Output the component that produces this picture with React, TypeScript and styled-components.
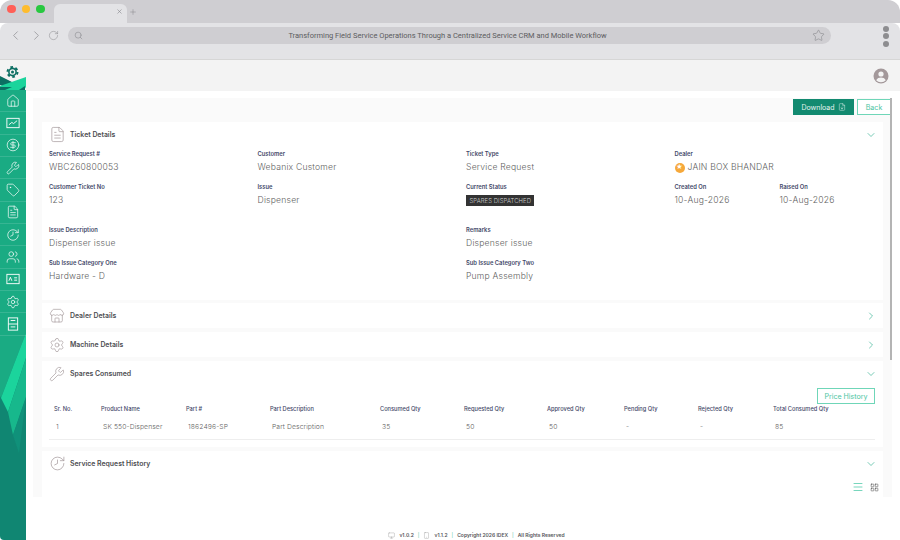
import * as React from "react";
import styled, { createGlobalStyle } from "styled-components";
import {
  ChevronDown,
  ChevronLeft,
  ChevronRight,
  CircleDollarSign,
  FileDown,
  FileText,
  History,
  Home,
  LayoutGrid,
  Menu,
  RotateCw,
  Search,
  Settings,
  Smartphone,
  Star,
  Store,
  Tag,
  Users,
  Wrench,
  Monitor,
  Plus,
  X,
} from "lucide-react";

const FONT = `Inter, "Open Sans", "Liberation Sans", sans-serif`;

const GlobalStyle = createGlobalStyle`
  html, body {
    margin: 0;
    padding: 0;
    background: #fff;
    overflow: hidden;
  }
  * {
    box-sizing: border-box;
  }
`;

const columns = [
  "Sr. No.",
  "Product Name",
  "Part #",
  "Part Description",
  "Consumed Qty",
  "Requested Qty",
  "Approved Qty",
  "Pending Qty",
  "Rejected Qty",
  "Total Consumed Qty",
];

const row = ["1", "SK 550-Dispenser", "1862496-SP", "Part Description", "35", "50", "50", "-", "-", "85"];

type IconProps = { size?: number; strokeWidth?: number };

const ChartBox = ({ size = 13, strokeWidth = 1.3 }: IconProps) => (
  <svg width={size} height={size} viewBox="0 0 24 24" fill="none" stroke="currentColor" strokeWidth={strokeWidth * 1.3}>
    <rect x="1.5" y="4" width="21" height="16" />
    <path d="M5 15l5-4 3 2 6-5" />
  </svg>
);

const CardBox = ({ size = 13, strokeWidth = 1.3 }: IconProps) => (
  <svg width={size} height={size} viewBox="0 0 24 24" fill="none" stroke="currentColor" strokeWidth={strokeWidth * 1.3}>
    <rect x="1.5" y="4" width="21" height="16" />
    <path d="M5 15l2.5-6 2.5 6M14 10h5M14 14h5" />
  </svg>
);

const Cabinet = ({ size = 13, strokeWidth = 1.3 }: IconProps) => (
  <svg width={size} height={size} viewBox="0 0 24 24" fill="none" stroke="currentColor" strokeWidth={strokeWidth * 1.3}>
    <rect x="4" y="1.5" width="16" height="21" />
    <path d="M4 12h16M8 6h8M8 17h8" />
  </svg>
);

const ClockBack = ({ size = 13, strokeWidth = 1.3 }: IconProps) => (
  <FlipIcon>
    <History size={size} strokeWidth={strokeWidth} />
  </FlipIcon>
);

const navIcons: React.ComponentType<IconProps>[] = [
  Home,
  ChartBox,
  CircleDollarSign,
  Wrench,
  Tag,
  FileText,
  ClockBack,
  Users,
  CardBox,
  Settings,
  Cabinet,
];

const Field = ({ label, children }: { label: string; children: React.ReactNode }) => (
  <FieldWrap>
    <Label>{label}</Label>
    <Value>{children}</Value>
  </FieldWrap>
);

const App = () => {
  return (
    <Window>
      <GlobalStyle />
      <TabStrip>
        <Lights>
          <Light color="#ff5f57" />
          <Light color="#febc2e" />
          <Light color="#28c840" />
        </Lights>
        <BrowserTab>
          <X size={7} strokeWidth={2} />
        </BrowserTab>
        <NewTab>
          <Plus size={8} strokeWidth={1.5} />
        </NewTab>
      </TabStrip>

      <Toolbar>
        <NavArrows>
          <ChevronLeft size={15} strokeWidth={1.2} />
          <ChevronRight size={15} strokeWidth={1.2} />
          <RotateCw size={11} strokeWidth={1.2} />
        </NavArrows>
        <AddressBar>
          <Search size={9} strokeWidth={1.6} />
          <UrlText>Transforming Field Service Operations Through a Centralized Service CRM and Mobile Workflow</UrlText>
          <Star size={13} strokeWidth={1.2} />
        </AddressBar>
        <Kebab>
          <i />
          <i />
          <i />
        </Kebab>
      </Toolbar>

      <Body>
        <Sidebar>
          <Brand>
            <svg width="26" height="30" viewBox="0 0 26 30">
              <polygon points="0,16 14,23 6,27 0,25" fill="#0c6f63" />
              <polygon points="0,30 0,26 26,17 26,27 24,30" fill="#1bd49c" />
              <polygon points="0,27 12,27 5,30 0,30" fill="#0c6f63" />
              <polygon points="19,30 25,26 25,30" fill="#0c6f63" />
              <circle cx="12.5" cy="12" r="5" fill="none" stroke="#0c6f63" strokeWidth="2" strokeDasharray="2.6 2.6" />
              <circle cx="12.5" cy="12" r="4.4" fill="#0c6f63" />
              <circle cx="12.5" cy="12" r="2.8" fill="#f3f3f3" />
              <circle cx="12.5" cy="12" r="1.5" fill="#0c6f63" />
            </svg>
          </Brand>
          <NavList>
            {navIcons.map((Icon, i) => (
              <NavItem key={i}>
                <Icon size={14} strokeWidth={1.2} />
              </NavItem>
            ))}
          </NavList>
          <SideArt viewBox="0 0 26 450">
            <rect width="26" height="450" fill="#108672" />
            <polygon points="0,0 26,0 26,243 1,308 0,306" fill="#1aab83" />
            <polygon points="26,243 26,268 8,322 1,308" fill="#1bd49c" />
            <polygon points="26,268 26,307 13,345 8,322" fill="#17b88c" />
            <polygon points="26,307 19,363 13,345" fill="#10917a" />
          </SideArt>
        </Sidebar>

        <Main>
          <TopBar>
            <Avatar viewBox="0 0 16 16">
              <circle cx="8" cy="8" r="7.5" fill="#a3989a" />
              <circle cx="8" cy="6" r="2.6" fill="#f3f3f3" />
              <path d="M3.2 12.2c1-2 2.9-2.7 4.8-2.7s3.8.7 4.8 2.7c-1.2 1.3-2.9 2-4.8 2s-3.6-.7-4.8-2z" fill="#f3f3f3" />
            </Avatar>
          </TopBar>

          <Content>
            <Panel>
              <ActionRow>
                <PrimaryButton>
                  Download <FileDown size={8} strokeWidth={1.4} />
                </PrimaryButton>
                <OutlineButton>Back</OutlineButton>
              </ActionRow>

              <Card>
                <CardHead>
                  <IconSlot>
                    <FileText size={17} strokeWidth={1} />
                  </IconSlot>
                  <CardTitle>Ticket Details</CardTitle>
                  <ChevronDown size={12} strokeWidth={1.3} />
                </CardHead>
                <FieldGrid>
                  <Field label="Service Request #">WBC260800053</Field>
                  <Field label="Customer">Webanix Customer</Field>
                  <Field label="Ticket Type">Service Request</Field>
                  <Field label="Dealer">
                    <StarBadge>★</StarBadge>JAIN BOX BHANDAR
                  </Field>

                  <Field label="Customer Ticket No">123</Field>
                  <Field label="Issue">Dispenser</Field>
                  <Field label="Current Status">
                    <StatusPill>SPARES DISPATCHED</StatusPill>
                  </Field>
                  <DatePair>
                    <Field label="Created On">10-Aug-2026</Field>
                    <Field label="Raised On">10-Aug-2026</Field>
                  </DatePair>

                  <WideField>
                    <Field label="Issue Description">Dispenser issue</Field>
                  </WideField>
                  <WideField>
                    <Field label="Remarks">Dispenser issue</Field>
                  </WideField>

                  <WideField>
                    <Field label="Sub Issue Category One">Hardware - D</Field>
                  </WideField>
                  <WideField>
                    <Field label="Sub Issue Category Two">Pump Assembly</Field>
                  </WideField>
                </FieldGrid>
              </Card>

              <SlimCard>
                <CardHead>
                  <IconSlot>
                    <Store size={16} strokeWidth={1} />
                  </IconSlot>
                  <CardTitle>Dealer Details</CardTitle>
                  <ChevronRight size={12} strokeWidth={1.3} />
                </CardHead>
              </SlimCard>

              <SlimCard>
                <CardHead>
                  <IconSlot>
                    <Settings size={16} strokeWidth={1} />
                  </IconSlot>
                  <CardTitle>Machine Details</CardTitle>
                  <ChevronRight size={12} strokeWidth={1.3} />
                </CardHead>
              </SlimCard>

              <SparesCard>
                <CardHead>
                  <IconSlot>
                    <Wrench size={16} strokeWidth={1} />
                  </IconSlot>
                  <CardTitle>Spares Consumed</CardTitle>
                  <ChevronDown size={12} strokeWidth={1.3} />
                </CardHead>
                <PriceRow>
                  <OutlineButton>Price History</OutlineButton>
                </PriceRow>
                <PartsTable>
                  {columns.map((c) => (
                    <Th key={c}>{c}</Th>
                  ))}
                  {row.map((c, i) => (
                    <Td key={i}>{c}</Td>
                  ))}
                </PartsTable>
              </SparesCard>

              <HistoryCard>
                <CardHead>
                  <IconSlot>
                    <ClockBack size={17} strokeWidth={1} />
                  </IconSlot>
                  <CardTitle>Service Request History</CardTitle>
                  <ChevronDown size={12} strokeWidth={1.3} />
                </CardHead>
                <ViewToggle>
                  <Menu size={12} strokeWidth={1.4} color="#3ec4a0" />
                  <LayoutGrid size={9} strokeWidth={1.4} color="#444" />
                </ViewToggle>
              </HistoryCard>
            </Panel>
            <Scrollbar />
          </Content>

          <Footer>
            <Monitor size={7} strokeWidth={1} />
            <FootText>v1.0.2</FootText>
            <FootSep>|</FootSep>
            <Smartphone size={7} strokeWidth={1} />
            <FootText>v1.1.2</FootText>
            <FootSep>|</FootSep>
            <FootText>Copyright 2026 IDEX</FootText>
            <FootSep>|</FootSep>
            <FootText>All Rights Reserved</FootText>
          </Footer>
        </Main>
      </Body>
    </Window>
  );
};

const Window = styled.div`
  width: 900px;
  height: 540px;
  display: flex;
  flex-direction: column;
  overflow: hidden;
  background: #fff;
  font-family: ${FONT};
`;

const TabStrip = styled.div`
  height: 23px;
  flex: none;
  display: flex;
  align-items: flex-end;
  background: #cfced2;
  border-radius: 12px 12px 0 0;
`;

const Lights = styled.div`
  width: 54px;
  height: 23px;
  flex: none;
  display: flex;
  align-items: center;
  gap: 6px;
  padding: 0 0 5px 7px;
`;

const Light = styled.span<{ color: string }>`
  width: 8.5px;
  height: 8.5px;
  border-radius: 50%;
  background: ${(p) => p.color};
`;

const BrowserTab = styled.div`
  width: 73px;
  height: 19px;
  display: flex;
  align-items: center;
  justify-content: flex-end;
  padding: 0 4px 4px 0;
  background: #e3e3e6;
  border-radius: 6px 6px 0 0;
  color: #85858a;
`;

const NewTab = styled.div`
  height: 19px;
  display: flex;
  align-items: center;
  padding: 0 0 4px 2px;
  color: #85858a;
`;

const Toolbar = styled.div`
  height: 37px;
  flex: none;
  display: flex;
  align-items: flex-start;
  padding-top: 4px;
  background: #e3e3e6;
  border-radius: 8px 8px 0 0;
  border-bottom: 1px solid #d6d6d6;
`;

const NavArrows = styled.div`
  width: 68px;
  height: 17px;
  flex: none;
  display: flex;
  align-items: center;
  gap: 6px;
  padding-left: 8px;
  color: #8f8f93;

  svg:last-child {
    margin-left: -2px;
  }
`;

const AddressBar = styled.div`
  width: 763px;
  height: 17px;
  display: flex;
  align-items: center;
  justify-content: space-between;
  padding: 0 6px;
  border-radius: 9px;
  background: #cfced2;
  color: #8d8d92;
`;

const UrlText = styled.span`
  font-family: Roboto, "Liberation Sans", sans-serif;
  font-size: 7.5px;
  color: #5c5c60;
`;

const Kebab = styled.div`
  margin-left: 52px;
  display: flex;
  flex-direction: column;
  gap: 1.3px;
  margin-top: -1px;

  i {
    display: block;
    width: 6px;
    height: 6px;
    border-radius: 50%;
    background: #8d8d90;
  }
`;

const Body = styled.div`
  flex: 1;
  min-height: 0;
  display: flex;
`;

const Sidebar = styled.aside`
  width: 26px;
  flex: none;
  display: flex;
  flex-direction: column;
  position: relative;
  border-bottom-left-radius: 4px;
  overflow: hidden;
`;

const Brand = styled.div`
  height: 30px;
  flex: none;
  position: relative;
  z-index: 1;
  background: #f3f3f3;

  svg {
    display: block;
  }
`;

const NavList = styled.nav`
  position: relative;
  z-index: 1;
  display: flex;
  flex-direction: column;
`;

const NavItem = styled.div`
  height: 22.35px;
  display: flex;
  align-items: center;
  justify-content: center;
  border-bottom: 1px solid rgba(255, 255, 255, 0.13);
  color: #fff;
`;

const SideArt = styled.svg`
  position: absolute;
  left: 0;
  top: 30px;
  width: 26px;
  height: 450px;
`;

const Main = styled.main`
  flex: 1;
  min-width: 0;
  display: flex;
  flex-direction: column;
`;

const TopBar = styled.header`
  height: 31px;
  flex: none;
  display: flex;
  align-items: center;
  justify-content: flex-end;
  padding-right: 11px;
  background: #f3f3f3;
`;

const Avatar = styled.svg`
  width: 16px;
  height: 16px;
`;

const Content = styled.div`
  height: 406px;
  flex: none;
  position: relative;
  padding: 7px 8px 0 7px;
  overflow: hidden;
`;

const Panel = styled.div`
  height: 399px;
  display: flex;
  flex-direction: column;
  padding: 1px 0 0 9px;
  background: #fafafa;
`;

const Scrollbar = styled.div`
  position: absolute;
  right: 8px;
  top: 7px;
  width: 2px;
  height: 262px;
  background: #b4b4b4;
`;

const ActionRow = styled.div`
  height: 16px;
  flex: none;
  display: flex;
  justify-content: flex-end;
  gap: 3px;
  margin-bottom: 7px;
  padding-right: 1px;
`;

const PrimaryButton = styled.button`
  width: 61px;
  height: 16px;
  padding: 0;
  display: flex;
  align-items: center;
  justify-content: center;
  gap: 3px;
  border: 0;
  background: #128a70;
  color: #e6f4f0;
  font-family: ${FONT};
  font-size: 7px;
  font-weight: 400;
`;

const OutlineButton = styled.button`
  height: 16px;
  min-width: 34px;
  padding: 0 6px;
  border: 1px solid #6fd6b8;
  background: #fff;
  color: #4cc5a2;
  font-family: ${FONT};
  font-size: 7.1px;
  font-weight: 400;
`;

const Card = styled.section`
  width: 841px;
  flex: none;
  background: #fff;
  margin-bottom: 3px;
`;

const SlimCard = styled(Card)`
  height: 25px;
  margin-bottom: 4px;
`;

const SparesCard = styled(Card)`
  padding-bottom: 7px;
  margin-bottom: 4px;
`;

const HistoryCard = styled(Card)`
  flex: 1;
  margin-bottom: 0;
`;

const CardHead = styled.div`
  height: 25px;
  display: flex;
  align-items: center;
  padding: 0 6px 0 7px;
  color: #a3989a;

  > svg:last-child {
    color: #2fae8e;
  }
`;

const IconSlot = styled.span`
  width: 21px;
  flex: none;
  display: flex;
  align-items: center;
`;

const FlipIcon = styled.span`
  display: flex;
  transform: scaleX(-1);
`;

const CardTitle = styled.h3`
  flex: 1;
  margin: 0;
  font-size: 6.9px;
  font-weight: 600;
  color: #4e4e52;
`;

const FieldGrid = styled.div`
  display: grid;
  grid-template-columns: repeat(4, 208.5px);
  grid-template-rows: 33px 43px 33px 33px;
  padding: 3px 0 8px 7px;
`;

const FieldWrap = styled.div`
  display: flex;
  flex-direction: column;
  gap: 4px;
`;

const WideField = styled.div`
  grid-column: span 2;
`;

const Label = styled.span`
  font-size: 5.8px;
  line-height: 8px;
  font-weight: 600;
  color: #3f4768;
`;

const Value = styled.span`
  display: flex;
  align-items: center;
  height: 11px;
  font-size: 8.6px;
  line-height: 11px;
  font-weight: 300;
  letter-spacing: 0.2px;
  color: #5f5f62;
`;

const StarBadge = styled.span`
  width: 10px;
  height: 10px;
  margin-right: 3px;
  display: inline-flex;
  align-items: center;
  justify-content: center;
  border-radius: 50%;
  background: #f6a83a;
  color: #fff;
  font-size: 6.5px;
  line-height: 1;
`;

const StatusPill = styled.span`
  height: 10.5px;
  padding: 0 3.5px;
  display: inline-flex;
  align-items: center;
  background: #333;
  color: #d4d4d4;
  font-size: 5.9px;
  font-weight: 300;
  letter-spacing: 0.1px;
`;

const DatePair = styled.div`
  display: grid;
  grid-template-columns: 105px 1fr;
`;

const PriceRow = styled.div`
  display: flex;
  justify-content: flex-end;
  padding-right: 8px;
  margin-top: 2px;

  button {
    width: 58px;
    padding: 0;
  }
`;

const PartsTable = styled.div`
  display: grid;
  grid-template-columns: 47px 85px 84px 110px 84px 83px 77px 74px 75px 1fr;
  margin: -1px 8px 0 7px;
  border-bottom: 1px solid #eeeeee;
`;

const Th = styled.div`
  height: 10px;
  padding: 0 0 0 5px;
  display: flex;
  align-items: center;
  font-size: 5.7px;
  font-weight: 500;
  color: #3f4768;
`;

const Td = styled.div`
  height: 26px;
  padding: 0 0 0 7px;
  display: flex;
  align-items: center;
  font-size: 6.8px;
  font-weight: 300;
  letter-spacing: 0.1px;
  color: #5f5f62;
`;

const ViewToggle = styled.div`
  display: flex;
  justify-content: flex-end;
  align-items: center;
  gap: 6px;
  padding: 5px 4px 0 0;
`;

const Footer = styled.footer`
  flex: 1;
  display: flex;
  align-items: flex-end;
  justify-content: center;
  gap: 4px;
  padding: 0 0 1px 27px;
  color: #777;
`;

const FootText = styled.span`
  font-size: 5px;
  line-height: 7px;
  font-weight: 600;
  color: #55555a;
`;

const FootSep = styled.span`
  font-size: 5px;
  line-height: 7px;
  color: #4cc5a2;
`;

export default App;
